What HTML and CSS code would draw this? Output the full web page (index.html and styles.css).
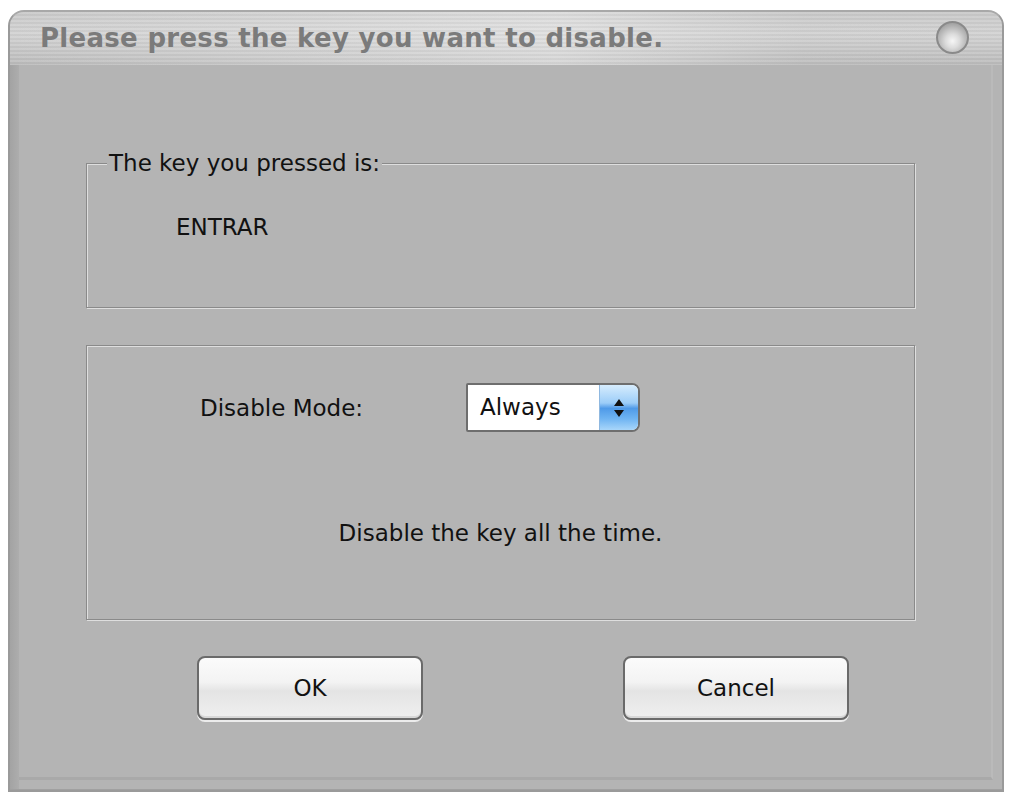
FILE: index.html
```html
<!DOCTYPE html>
<html>
<head>
<meta charset="utf-8">
<link rel="stylesheet" href="styles.css">
</head>
<body>
<div class="window">
  <div class="titlebar">
    <span class="title">Please press the key you want to disable.</span>
    <span class="close"></span>
  </div>
  <div class="frame">
    <div class="content">
      <fieldset class="group group-key">
        <legend class="legend">The key you pressed is:</legend>
        <div class="keyname">ENTRAR</div>
      </fieldset>
      <fieldset class="group group-mode">
        <div class="mode-row">
          <span class="mode-label">Disable Mode:</span>
          <div class="select">
            <span class="select-value">Always</span>
            <span class="spin">
              <svg width="14" height="22" viewBox="0 0 14 22"><path d="M7 2 L12 9 L2 9 Z M2 13 L12 13 L7 20 Z" fill="#111"/></svg>
            </span>
          </div>
        </div>
        <div class="mode-desc">Disable the key all the time.</div>
      </fieldset>
      <div class="buttons">
        <button class="btn">OK</button>
        <button class="btn">Cancel</button>
      </div>
    </div>
  </div>
</div>
</body>
</html>
```

FILE: styles.css
```css
html, body {
  margin: 0;
  padding: 0;
  background: #ffffff;
}
body {
  font-family: "DejaVu Sans", Tahoma, sans-serif;
  color: #111;
}
.window {
  margin: 10px 0 0 8px;
  width: 996px;
  height: 782px;
  box-sizing: border-box;
  border: 2px solid #9a9a9a;
  border-top-color: #a8a8a8;
  border-radius: 16px 16px 0 0;
  background: #b4b4b4;
  display: flex;
  flex-direction: column;
  overflow: hidden;
}
.titlebar {
  height: 53px;
  flex: none;
  display: flex;
  align-items: center;
  justify-content: space-between;
  padding: 0 33px 0 30px;
  background:
    repeating-linear-gradient(180deg, rgba(255,255,255,0.08) 0 2px, rgba(0,0,0,0.03) 2px 4px),
    linear-gradient(90deg, rgba(200,200,200,0) 0%, rgba(235,235,235,0.55) 55%, rgba(200,200,200,0.1) 80%, rgba(0,0,0,0) 100%),
    linear-gradient(180deg, #c9c9c9 0%, #d3d3d3 40%, #c6c6c6 75%, #bcbcbc 100%);
}
.title {
  font-family: "DejaVu Sans", Verdana, sans-serif;
  font-weight: bold;
  font-size: 26px;
  color: #7b7b7b;
  letter-spacing: 0.3px;
  margin-top: -2px;
}
.close {
  width: 33px;
  height: 33px;
  border-radius: 50%;
  box-sizing: border-box;
  border: 2px solid #8a8a8a;
  background: radial-gradient(circle at 50% 62%, #f6f6f6 0%, #dcdcdc 30%, #a8a8a8 72%, #8f8f8f 100%);
  margin-top: -2px;
}
.frame {
  flex: 1;
  display: flex;
  padding: 0 9px 9px 9px;
  background: linear-gradient(90deg, #a3a3a3 0, #adadad 9px, #b4b4b4 9px);
  border-bottom: 1px solid #a0a0a0;
}
.content {
  flex: 1;
  background: #b4b4b4;
  border-bottom: 3px solid #a9a9a9;
  border-right: 2px solid #bababa;
  padding: 85px 76px 0 67px;
  display: flex;
  flex-direction: column;
}
.group {
  margin: 0;
  padding: 0;
  border: 1px solid #8a8a8a;
  box-shadow: inset 1px 1px 0 #dedede, 1px 1px 0 #dedede;
  min-width: 0;
}
.legend {
  margin-left: 20px;
  padding: 0 2px;
  font-size: 23px;
  line-height: 26px;
  background: #b4b4b4;
  color: #111;
}
.group-key {
  height: 158px;
  box-sizing: border-box;
}
.keyname {
  font-size: 23px;
  line-height: 26px;
  margin: 38px 0 0 89px;
}
.group-mode {
  margin-top: 37px;
  height: 275px;
  box-sizing: border-box;
  padding-top: 37px;
}
.mode-row {
  display: flex;
  align-items: center;
  padding-left: 113px;
}
.mode-label {
  font-size: 23px;
  width: 266px;
}
.select {
  width: 174px;
  height: 49px;
  box-sizing: border-box;
  border: 2px solid #6e6e6e;
  border-radius: 2px 8px 8px 2px;
  background: #ffffff;
  display: flex;
  align-items: stretch;
  overflow: hidden;
}
.select-value {
  flex: 1;
  font-size: 23px;
  line-height: 45px;
  padding-left: 12px;
}
.spin {
  width: 38px;
  display: flex;
  align-items: center;
  justify-content: center;
  background: linear-gradient(180deg, #d6ecfd 0%, #9ccdf8 40%, #4f9ae8 52%, #6fb4f2 75%, #a8d6fa 100%);
  border-left: 1px solid #8fb8e0;
}
.mode-desc {
  text-align: center;
  font-size: 23px;
  margin-top: 88px;
}
.buttons {
  display: flex;
  justify-content: space-between;
  padding: 0 66px 0 111px;
  margin-top: 36px;
}
.btn {
  width: 226px;
  height: 64px;
  border: 2px solid #6a6a6a;
  border-radius: 8px;
  background: linear-gradient(180deg, #fbfbfb 0%, #f3f3f3 40%, #e4e4e4 55%, #efefef 100%);
  box-shadow: 0 2px 0 #ececec, inset 0 -2px 0 #d8d8d8;
  font-family: "DejaVu Sans", Tahoma, sans-serif;
  font-size: 23px;
  color: #111;
  padding: 0;
}
```
